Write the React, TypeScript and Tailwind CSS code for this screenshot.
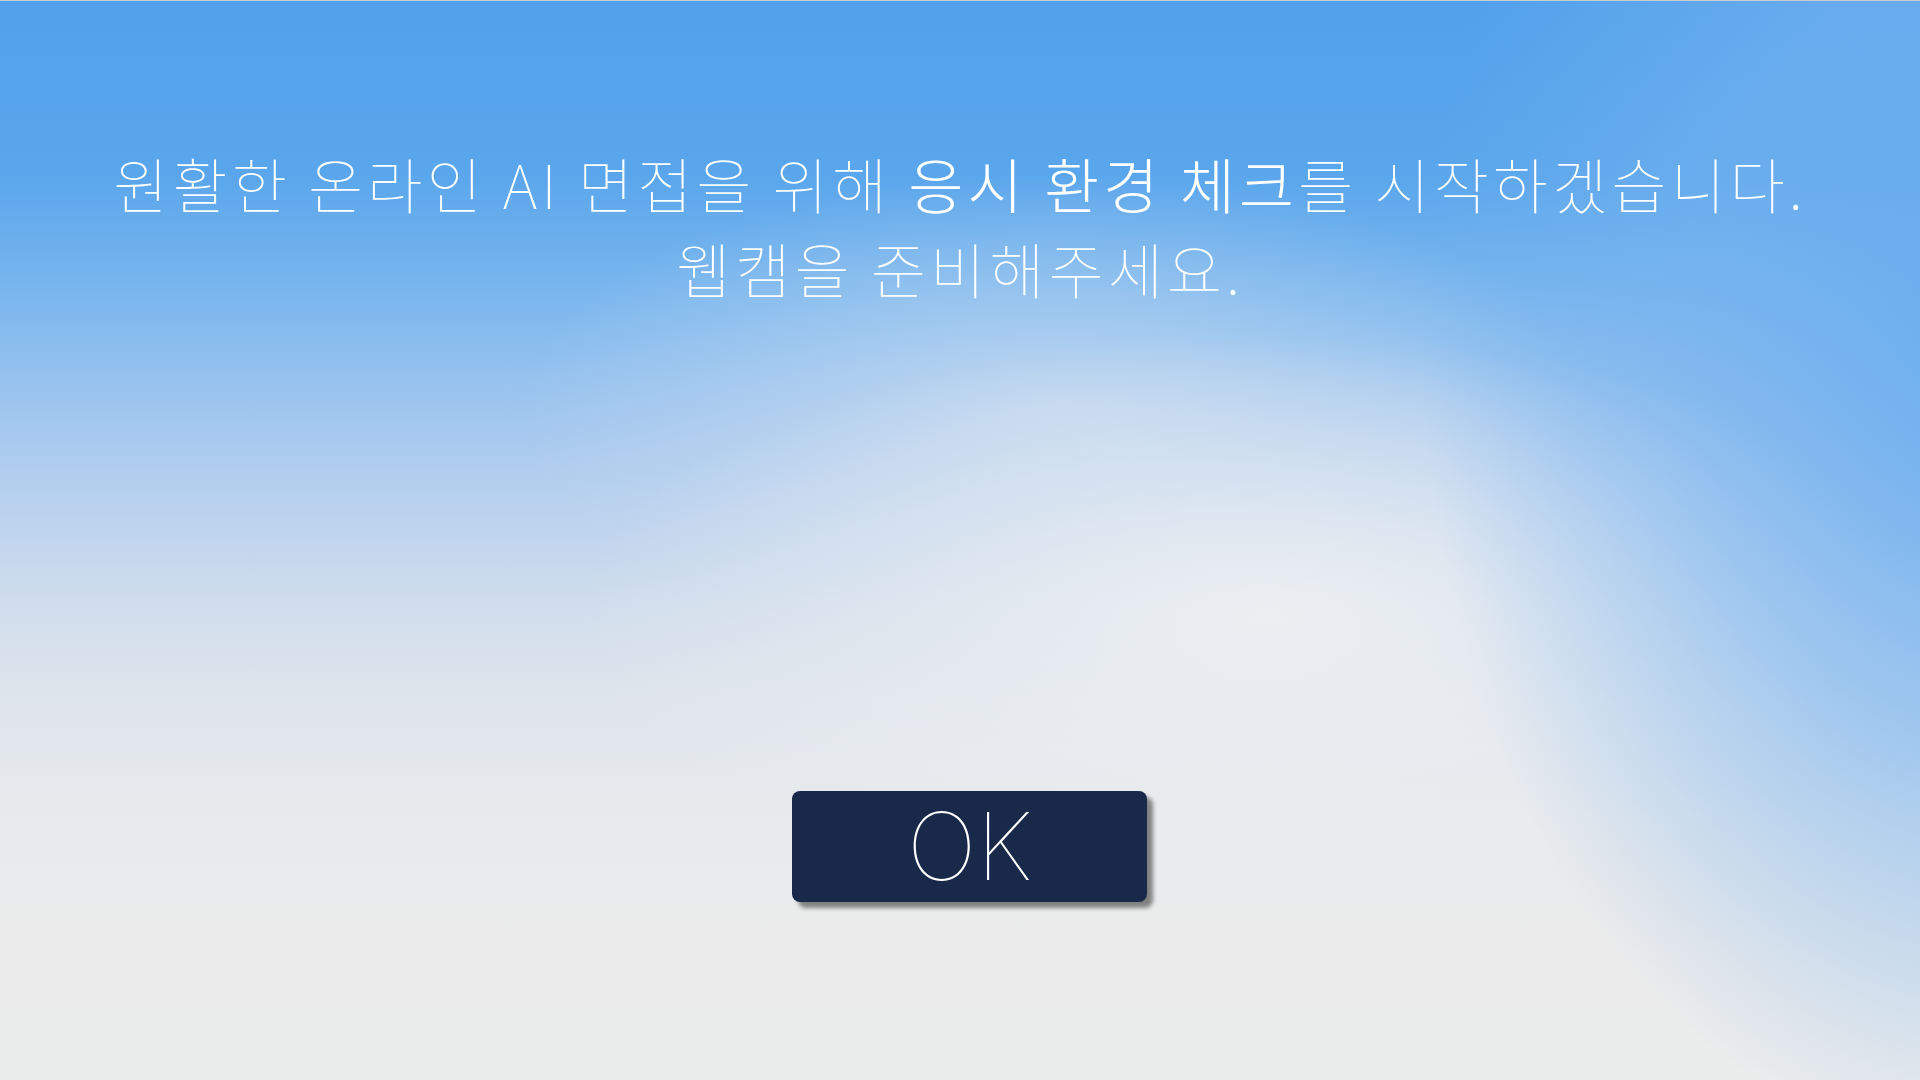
import React from "react";

export default function App() {
  return (
    <div className="relative flex h-screen w-full flex-col items-center overflow-hidden border-t border-[#c9ced4] bg-[radial-gradient(ellipse_30%_75%_at_104%_32%,rgba(106,173,239,0.95)_0%,rgba(116,178,239,0.6)_50%,rgba(116,178,239,0)_100%),radial-gradient(ellipse_36%_26%_at_66%_57%,rgba(238,240,242,0.95)_0%,rgba(236,239,242,0)_100%),radial-gradient(ellipse_28%_22%_at_55%_38%,rgba(214,226,240,0.6)_0%,rgba(214,226,240,0)_100%),linear-gradient(180deg,#52a1eb_0%,#5aa6ec_16%,#7db8ee_28%,#a0c6ee_38%,#bad2ee_47%,#d0ddec_56%,#dfe5ec_65%,#e8eaec_76%,#ebebeb_88%,#ebecec_100%)] font-['Noto_Sans_CJK_KR',sans-serif]">
      <div className="pt-[139px] text-center text-[60px] font-thin leading-[85px] tracking-[4px] text-white">
        <p>
          원활한 온라인 AI 면접을 위해{" "}
          <span className="font-light">응시 환경 체크</span>를 시작하겠습니다.
        </p>
        <p>웹캠을 준비해주세요.</p>
      </div>

      <button
        type="button"
        className="ml-[19px] mt-[481px] flex h-[111px] w-[355px] items-center justify-center rounded-[8px] bg-[#18294a] font-['Inter',sans-serif] text-[93px] font-thin leading-none text-white shadow-[6px_6px_4px_rgba(0,0,0,0.45)]"
      >
        OK
      </button>
    </div>
  );
}
